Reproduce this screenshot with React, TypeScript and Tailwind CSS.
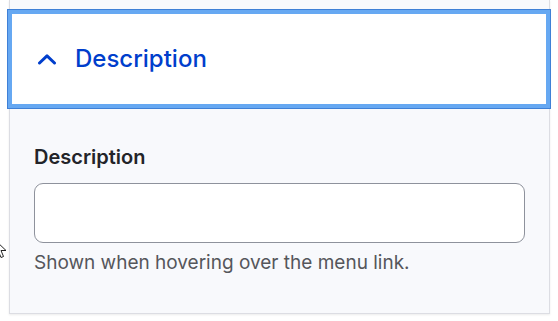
import React from "react";

export default function App() {
  return (
    <div
      className="relative w-[558px] h-[321px] overflow-hidden bg-white"
      style={{ fontFamily: "Inter, 'Noto Sans', sans-serif" }}
    >
      <div className="ml-[9px] w-[541px] h-[314px] bg-[#f8f9fc] border-x border-b border-[#dcdde3] shadow-[0_1px_2px_rgba(0,0,0,0.08)] pt-[10px]">
        <div className="-ml-[2px] w-[542px] h-[98px] bg-white border-[4px] border-[#66a8f2] shadow-[0_0_0_1px_#3f80d6] flex items-center pl-[25px]">
          <svg width="20" height="12" viewBox="0 0 20 12" className="shrink-0">
            <path
              d="M2.5 10 L10 2.8 L17.5 10"
              fill="none"
              stroke="#003ecc"
              strokeWidth="3"
              strokeLinecap="round"
              strokeLinejoin="round"
            />
          </svg>
          <span className="ml-[18px] text-[24px] leading-[30px] font-medium text-[#003ecc]">
            Description
          </span>
        </div>
        <div className="pl-[24px] pt-[37px]">
          <div className="text-[20px] leading-[24px] font-semibold text-[#232429]">
            Description
          </div>
          <div className="mt-[14px] w-[491px] h-[60px] bg-white border border-[#8e929c] rounded-[9px]" />
          <div className="mt-[8px] text-[19px] leading-[24px] text-[#55565b]">
            Shown when hovering over the menu link.
          </div>
        </div>
      </div>
      <svg
        className="absolute left-[-6px] top-[239px]"
        width="14"
        height="20"
        viewBox="0 0 14 20"
      >
        <path
          d="M1 1 L1 16 L4.5 12.5 L7 18.5 L9.5 17.5 L7 11.5 L12 11.5 Z"
          fill="white"
          stroke="#222"
          strokeWidth="1"
          strokeLinejoin="round"
        />
      </svg>
    </div>
  );
}
